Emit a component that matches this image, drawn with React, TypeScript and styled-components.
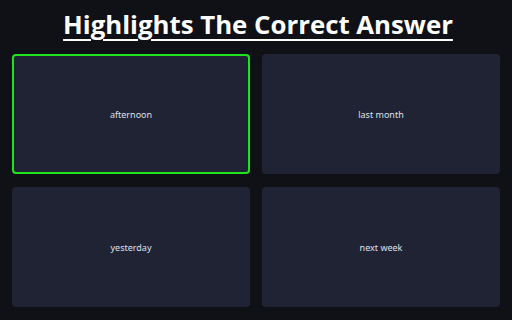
import styled, { createGlobalStyle } from 'styled-components';

const GlobalStyle = createGlobalStyle`
  html, body {
    margin: 0;
    padding: 0;
    background-color: #101116;
  }
`;

const Page = styled.div`
  width: 512px;
  height: 320px;
  display: flex;
  flex-direction: column;
  background-color: #101116;
  box-sizing: border-box;
`;

const Header = styled.div`
  height: 54px;
  display: flex;
  justify-content: center;
  align-items: flex-start;
`;

const Title = styled.h1`
  margin: 7px 0 0 4px;
  font-family: 'Open Sans', 'Liberation Sans', sans-serif;
  font-weight: 700;
  font-size: 25.8px;
  line-height: 34px;
  color: #ffffff;
  text-decoration: underline;
  text-decoration-thickness: 2px;
  text-underline-offset: 5px;
`;

const Grid = styled.div`
  display: grid;
  grid-template-columns: 1fr 1fr;
  grid-template-rows: 120px 120px;
  gap: 13px 12px;
  padding: 0 12px;
`;

const Card = styled.div<{ correct: boolean }>`
  display: flex;
  align-items: center;
  justify-content: center;
  background-color: #202333;
  border-radius: 4px;
  box-sizing: border-box;
  border: ${(props) => (props.correct ? '2px solid #1ee41e' : 'none')};
  font-family: 'Noto Sans', 'Liberation Sans', sans-serif;
  font-size: 9px;
  color: #dde0ee;
`;

const answers = [
  { text: 'afternoon', correct: true },
  { text: 'last month', correct: false },
  { text: 'yesterday', correct: false },
  { text: 'next week', correct: false },
];

export default function App() {
  return (
    <>
      <GlobalStyle />
      <Page>
        <Header>
          <Title>Highlights The Correct Answer</Title>
        </Header>
        <Grid>
          {answers.map((a) => (
            <Card key={a.text} correct={a.correct}>
              {a.text}
            </Card>
          ))}
        </Grid>
      </Page>
    </>
  );
}
